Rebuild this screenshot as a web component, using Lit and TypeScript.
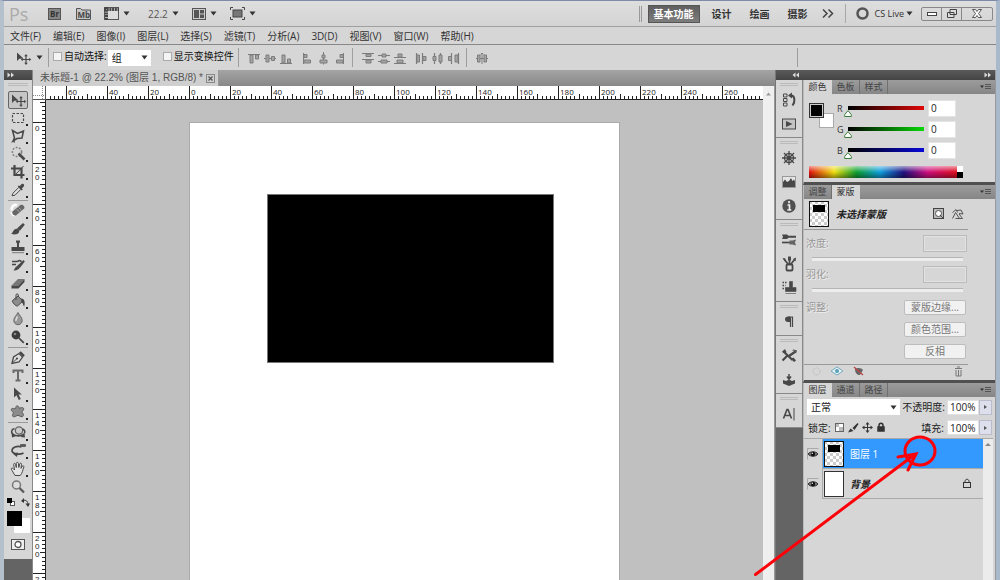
import { LitElement, html, svg, css, SVGTemplateResult } from "lit";
import { customElement, property, state } from "lit/decorators.js";

type Glyph = SVGTemplateResult;

const D = "#484848";
const M = "#7c7c7c";
const F = "#a4a4a4";

const toolGlyphs: Record<string, Glyph> = {
  move: svg`<path d="M3 3.500v8.500l2.300-2.200 4.200-.3z" fill="${D}"/><path d="M12 6.500v8M8 10.500h8" stroke="${D}" stroke-width="1.200"/><path d="M12 5l1.800 2.200h-3.600zM12 16l1.800-2.200h-3.600zM6.800 10.500l2-1.700v3.400zM17.200 10.500l-2-1.700v3.400z" fill="${D}"/>`,
  marquee: svg`<rect x="3.500" y="4.500" width="11" height="9" fill="none" stroke="${D}" stroke-width="1.200" stroke-dasharray="2.500 1.500"/>`,
  lasso: svg`<path d="M3.500 3.500l5 3 6-2.500-1.500 7-5 .5-4 2.500 1.500-3zM5 11.500c-.8 1.500.5 3 0 4" fill="none" stroke="${D}" stroke-width="1.500"/>`,
  wand: svg`<circle cx="8" cy="7" r="4.600" fill="none" stroke="${M}" stroke-width="1.500" stroke-dasharray="1.800 1.500"/><path d="M9.500 8.500l6 6" stroke="${D}" stroke-width="2.600"/>`,
  crop: svg`<path d="M5.500 2v10h10M2 5.500h10.500V15.500" fill="none" stroke="${D}" stroke-width="2.200"/><path d="M6 12L14.500 3" stroke="${D}" stroke-width="1"/>`,
  dropper: svg`<path d="M3 14.800l1-2.600 6-6 2 2-6 6z" fill="#ddd" stroke="${D}"/><path d="M8.800 5.500l3.900 3.900 1-1-.8-1 2-2.200c1-1.300-.8-3.200-2.200-2.200l-2 2-1-.6z" fill="${D}"/>`,
  heal: svg`<path d="M8 3.200c-3.500-1.200-6 1.600-5 5.300M2.500 10c.7 2 2 3 3.500 3" fill="none" stroke="#fff" stroke-width="2.600"/><path d="M3.500 9.500L11.500 3c1.500-1.200 5 1.500 3.700 3.500l-8 6.800c-2 1-5-1.800-3.700-3.800z" fill="#666"/><path d="M7.500 7.200l3.200 2.800M9.500 5.500l3 2.800" stroke="#aaa"/>`,
  brush: svg`<path d="M8 8.500l6-5.500 1.800 1.800L10.800 10.800z" fill="${D}"/><path d="M2 13.500c2.200-.2 2-4.800 5.800-4.700 2 .4 3.200 2.200 2 4-1.600 2.100-5.500 2-7.800.7z" fill="${D}"/>`,
  stamp: svg`<path d="M7 2.500h4v1.600l-1 1.400v3.500h5.500v4h-13V9H8V5.500L7 4.100z" fill="${D}"/><path d="M3 14.700h12" stroke="${M}"/>`,
  history: svg`<path d="M8 10l6.500-6 1.300 1.500-5 6.500z" fill="${D}"/><path d="M4 14.300c2.200 0 1.800-4.300 5-4.200 3.300 1.500.4 5-5 4.200z" fill="${D}"/><path d="M3 5.500h5.500M3 8.500h4M8.500 5.500c2-1.500 3.500-1.300 3.500.5" fill="none" stroke="${D}" stroke-width="1.700"/>`,
  eraser: svg`<path d="M2.500 11.500L9 5h6.500l-6 6.500z" fill="#777"/><path d="M2.500 11.500h7v3h-7zM9.500 11.500l6-6.500v3l-6 6.500z" fill="${D}"/>`,
  bucket: svg`<path d="M3.500 8.500L9 4l5 5-5.500 5c-1 .8-6-3.800-5-5.500z" fill="#8c8c8c" stroke="${D}"/><path d="M7 8V3c0-1.500 2.300-1.500 2.300 0v2" fill="none" stroke="${D}"/><path d="M12 6.500c3.500 0 4.300 3 3.300 8-1.500-1.200-1-3.500-3-4.500z" fill="${D}"/>`,
  blur: svg`<path d="M9 2.500c1.500 3 4.200 5 4.200 8a4.200 4.200 0 0 1-8.400 0c0-3 2.700-5 4.200-8z" fill="#999" stroke="#666"/><path d="M8.500 6.500c-1 1.500-2 3-1.500 4.500" fill="none" stroke="#ddd" stroke-width="1.500"/>`,
  dodge: svg`<circle cx="7" cy="7" r="4.400" fill="#3c3c3c"/><path d="M9.800 9.800l5 5" stroke="${D}" stroke-width="1.700"/><circle cx="6" cy="6" r="1.300" fill="#888"/>`,
  pen: svg`<path d="M3 14.500l1.500-6.500L10 4.500l3.500 3.500-3.500 5z" fill="#ddd" stroke="${D}" stroke-width="1.300"/><path d="M3 14.500l4.500-4.500" stroke="${D}"/><circle cx="8" cy="9.500" r="1.100" fill="${D}"/><path d="M10 3.800l1.800-1.600 4 4L14.200 8z" fill="${D}"/>`,
  type: svg`<path d="M4.500 6V3.500h9V6M9 3.500v10M6.500 13.500h5" fill="none" stroke="#6b6b6b" stroke-width="2"/>`,
  pointer: svg`<path d="M5 2.500v10l2.500-2.200 2.300 4.700 2-1-2.300-4.500h3.300z" fill="${D}"/>`,
  shape: svg`<path d="M7 3.500c2-1.700 3.300.5 3.300 2 2-1.500 5.200-1.200 4.200 1.300-.5 1-1.500 1.400-1.500 2.400 1.700 1.500 2 4.300 0 4.500-1.600.2-2.600-1.300-4-1.300-1.500 0-3.300 2-4.800 1.300-1.700-1 .2-3 .2-4.400C3 8.500 1.600 7 2.600 5.800c1-1.200 3.300.5 4-.3.500-.6-.3-1.500.4-2z" fill="#8c8c8c" stroke="#5b5b5b"/>`,
  rotate3d: svg`<circle cx="10" cy="6.500" r="3.700" fill="#ccc" stroke="#666" stroke-width="1.300"/><path d="M5.500 4.500C2 5.500 1.500 9 5 10.800c3 1.500 7 1.200 10-1M13.500 5c2.500 1 2.800 3 1.800 4.500" fill="none" stroke="${D}" stroke-width="1.500"/><path d="M2.500 8.500l.5 5 4.500-1.500zM15.500 9.500l.5 4-4.500-.5z" fill="${D}"/>`,
  orbit3d: svg`<path d="M12.500 5C8 3.500 3 5.500 3 8.500s7 5 11.500 2.500" fill="none" stroke="${D}" stroke-width="1.700"/><path d="M3.500 11.500l5.500-1-1 4.500z" fill="${D}"/><rect x="11" y="2" width="6" height="3" rx="1" fill="#5c5c5c"/>`,
  hand: svg`<path d="M6 15.500L3 10.500c-1.700-2.500.2-3.500 1.800-1.200l.7.700-.8-5.500c0-1.500 1.600-1.500 1.900 0l.7 3 0-4c.2-1.600 2-1.600 2.200 0l.3 4 .9-3.500c.4-1.400 2-1 1.800.4l-.5 4 1.200-2c.8-1.200 2-.5 1.600.7-1.200 3.200-1.400 6.400-3.600 8.400z" fill="#e4e4e4" stroke="${D}"/>`,
  zoom: svg`<circle cx="7.500" cy="7" r="4" fill="#ddd" stroke="#777" stroke-width="1.500"/><path d="M10.500 10l4.500 4.500" stroke="#5a5a5a" stroke-width="2.300"/>`,
};

const dockGlyphs: Record<string, Glyph> = {
  historyPanel: svg`<path d="M3.500 3h3.500v3h-3.500zM3.500 7.500h3.500v3h-3.500zM3.500 12h3.500v3h-3.500z" fill="none" stroke="${D}"/><path d="M9.500 4.500h1.500c4 0 4.500 6 1.500 10" fill="none" stroke="${D}" stroke-width="2"/><path d="M8 4.500l4-3v6z" fill="${D}"/>`,
  actions: svg`<rect x="2.500" y="4" width="13" height="10" fill="#c4c4c4" stroke="${D}"/><path d="M6 6v6l6.500-3z" fill="${D}"/>`,
  adjust: svg`<circle cx="9" cy="9" r="4.500" fill="none" stroke="${D}" stroke-width="1.300"/><path d="M9 2v14M2 9h14M4 4l10 10M14 4L4 14" stroke="${D}" stroke-width="1.300"/><circle cx="9" cy="9" r="2" fill="${D}"/>`,
  histogram: svg`<rect x="2.500" y="3.500" width="13" height="11" fill="#e5e5e5" stroke="#999"/><path d="M3 14V9l2-2.500 2 2.500 2-1 2-3 1.500 3L14 6.500l1 2V14z" fill="${D}"/>`,
  info: svg`<circle cx="9" cy="9" r="6.700" fill="#505050"/><path d="M9 4v2.200M7.500 8h2v5M7.300 13h4" stroke="#eee" stroke-width="1.700" fill="none"/>`,
  brushes: svg`<path d="M2 3.500h5l1.500 1.200H16v2H8.500L7 8H2l1-2z" fill="${D}"/><path d="M2 11.500h8" stroke="${D}" stroke-width="1.700"/><path d="M9.500 9.500h3l3.500-1-1 3 1 3-3.500-1h-3z" fill="#666"/>`,
  presets: svg`<rect x="6.500" y="9.500" width="6" height="6" rx="1" fill="#ddd" stroke="${D}" stroke-width="1.800"/><path d="M8 9L4 4M9.500 9V3M11 9l4-5" stroke="${D}" stroke-width="1.700"/><path d="M2.500 3l3 .5-.5 3zM8 1.500h3v4H8zM13 4l3-1.500-.5 4z" fill="${D}"/>`,
  clone: svg`<path d="M2.500 3.500h4M2.500 6.500h3M2.500 9.500h3" stroke="${D}" stroke-width="1.500" stroke-dasharray="1.500 1"/><path d="M9.500 2.500h3v6h3.500v4H5.500v-4h4zM5.500 14.500H16" fill="${D}" stroke="${D}" stroke-width=".6"/>`,
  paragraph: svg`<path d="M10.500 4v10M12.500 4v10M13 4H8.500" stroke="${D}" stroke-width="1.200"/><path d="M10 3.500H8c-4 0-4 5.500 0 5.500h2z" fill="${D}"/>`,
  toolsets: svg`<path d="M3 4l9.500 9M7 9l-4.500 4.500M15.500 4.500L9 9" stroke="${D}" stroke-width="2.200"/><path d="M2 5l3-3 1.500 3L5 6.500zM11 12l2.500-1.500 2.500 3-2 1.500zM12 3.500l3 .2L16 6.500l1-3-3.500-1z" fill="${D}"/>`,
  comps: svg`<path d="M3 9l3 1 3-1.500 3 1.500 3-1v3.500L9 15l-6-2.500z" fill="${D}"/><path d="M9 3v5M7 5.500L9 8.200l2-2.700" stroke="${D}" stroke-width="1.500" fill="none"/>`,
  character: svg`<path d="M3.500 13.500L7 4.500h1l3.500 9M5 10.500h5.500" fill="none" stroke="${D}" stroke-width="1.600"/><path d="M14 3v12.500" stroke="${D}"/>`,
};

const alignGlyphs: Record<string, Glyph> = {
  top: svg`<path d="M1 3.500h12" stroke="${M}"/><path d="M3 4h3v8H3zM8.500 4h3v4h-3z" fill="${F}" stroke="${M}"/>`,
  middle: svg`<path d="M1 7.500h12" stroke="${M}"/><path d="M3 4h3v7H3zM8.500 5.500h3v4h-3z" fill="${F}" stroke="${M}"/>`,
  bottom: svg`<path d="M1 12.500h12" stroke="${M}"/><path d="M3 4h3v8H3zM8.500 8h3v4h-3z" fill="${F}" stroke="${M}"/>`,
  left: svg`<path d="M3.500 2v11" stroke="${M}"/><path d="M4 3.500h3v3H4zM4 9h6.500v3H4z" fill="${F}" stroke="${M}"/>`,
  center: svg`<path d="M7.500 1v12.500" stroke="${M}"/><path d="M6 4h3v3H6zM4 9h7v3H4z" fill="${F}" stroke="${M}"/>`,
  right: svg`<path d="M11.500 2v11" stroke="${M}"/><path d="M8 3.500h3v3H8zM4.500 9H11v3H4.500z" fill="${F}" stroke="${M}"/>`,
  distTop: svg`<path d="M1 2.500h12M1 8.500h12" stroke="${M}" stroke-width="1.200"/><path d="M5 3h5v2.500H5zM5 9h5v3H5z" fill="${F}" stroke="${M}"/>`,
  distMid: svg`<path d="M1 4.500h12M1 10.500h12" stroke="${M}" stroke-width="1.200"/><path d="M5 3h4v3H5zM4 9h6v3H4z" fill="${F}" stroke="${M}"/>`,
  distBot: svg`<path d="M1 6.500h12M1 12.500h12" stroke="${M}" stroke-width="1.200"/><path d="M5 3h4v3H5zM4 9h6v3H4z" fill="${F}" stroke="${M}"/>`,
  distLeft: svg`<path d="M2.500 2v11M8.500 2v11" stroke="${M}" stroke-width="1.200"/><path d="M3 4h2.500v7H3zM9 5.500h3v4H9z" fill="${F}" stroke="${M}"/>`,
  distCen: svg`<path d="M4.500 2v11M10.500 2v11" stroke="${M}" stroke-width="1.200"/><path d="M3 5.500h3v4H3zM9 4h3v7H9z" fill="${F}" stroke="${M}"/>`,
  distRight: svg`<path d="M5.500 2v11M12.500 2v11" stroke="${M}" stroke-width="1.200"/><path d="M2.500 5.500h3v4h-3zM9 4h3v7H9z" fill="${F}" stroke="${M}"/>`,
  auto: svg`<path d="M7 2v11M1 7.500h12" stroke="${M}"/><path d="M2.500 4H5v7H2.500zM9 4h2.500v7H9zM5.500 3.500L7 2l1.500 1.500" fill="${F}" stroke="${M}"/>`,
};

const caret = html`<svg class="caret" width="7" height="5" viewBox="0 0 7 5" aria-hidden="true"><path d="M.5.500h6L3.500 4.500z" fill="#333" /></svg>`;

const checker = svg`<defs><pattern id="chk" width="6" height="6" patternUnits="userSpaceOnUse"><rect width="6" height="6" fill="#fff"/><path d="M0 0h3v3H0zM3 3h3v3H3z" fill="#ccc"/></pattern></defs>`;

const layerThumb = html`<svg width="20" height="26" viewBox="0 0 20 26" aria-hidden="true">
  ${checker}<rect x=".5" y=".5" width="19" height="25" fill="url(#chk)" stroke="#111" /><rect x="4" y="4" width="12" height="7" fill="#000" />
</svg>`;

const eye = html`<svg width="12" height="12" viewBox="0 0 12 12" aria-hidden="true">
  <path d="M.5 11.500V.5h11" stroke="#aaa" fill="none" />
  <path d="M1 6C3 3 9 3 11 6 9 9 3 9 1 6z" fill="#777" stroke="#333" /><circle cx="6" cy="6" r="2.200" fill="#111" /><circle cx="5.300" cy="5.300" r=".7" fill="#fff" />
</svg>`;

const range = (from: number, to: number) => Array.from({ length: Math.max(0, to - from + 1) }, (_, i) => from + i);

@customElement("edge-ruler")
class EdgeRuler extends LitElement {
  @property() axis: "x" | "y" = "x";
  @property({ type: Number }) origin = 0;
  @state() private extent = 0;

  static styles = css`
    :host { display: block; overflow: hidden; background: #fff; min-width: 0; min-height: 0; }
    svg { display: block; width: 100%; height: 100%; }
    text { font: 8px "Open Sans", sans-serif; fill: #222; }
    .down { font-family: "Liberation Sans", sans-serif; }
    path { stroke: #222; fill: none; shape-rendering: crispEdges; }
  `;

  private watcher = new ResizeObserver(() => this.measure());

  connectedCallback() {
    super.connectedCallback();
    this.watcher.observe(this);
  }

  disconnectedCallback() {
    this.watcher.disconnect();
    super.disconnectedCallback();
  }

  private measure() {
    this.extent = this.axis === "x" ? this.clientWidth : this.clientHeight;
  }

  render() {
    const step = 41 / 10;
    const first = Math.ceil(-this.origin / step);
    const last = Math.floor((this.extent - this.origin) / step);
    const marks = range(first, last).map((k) => ({ k, at: Math.round(this.origin + k * step) + 0.5 }));
    const size = (k: number) => (k % 10 === 0 ? 14 : k % 5 === 0 ? 5 : 3);
    const horizontal = this.axis === "x";
    const d = marks.map(({ k, at }) => (horizontal ? `M${at} 13v-${size(k)}` : `M12 ${at}h-${size(k)}`)).join("");
    const majors = marks.filter(({ k }) => k % 10 === 0);
    return html`<svg aria-hidden="true">
      <path d=${d} />
      <path d=${horizontal ? `M0 13.500h${this.extent}` : `M12.500 0v${this.extent}`} />
      ${majors.map(({ k, at }) => {
        const label = String(Math.abs(k * 2));
        return horizontal
          ? at + 16 < this.extent ? svg`<text x=${at + 1.5} y="9">${label}</text>` : ""
          : label.split("").map((c, i) => (at + 5 + i * 8 < this.extent ? svg`<text class="down" x="2" y=${at + 8 + i * 8}>${c}</text>` : ""));
      })}
    </svg>`;
  }
}

@customElement("panel-tabs")
class PanelTabs extends LitElement {
  @property({ type: Array }) tabs: string[] = [];
  @property({ type: Number }) active = 0;

  static styles = css`
    :host { display: flex; height: 14px; background: linear-gradient(#9c9c9c, #868686); align-items: stretch; }
    button { all: unset; box-sizing: border-box; width: 28px; text-align: center; font: 9px/14px "Open Sans", "Noto Sans CJK SC", sans-serif; color: #444; border-right: 1px solid #707070; white-space: nowrap; }
    button.on { background: #d6d6d6; color: #333; border-color: #d6d6d6; }
    svg { margin: auto 3px auto auto; }
  `;

  render() {
    return html`${this.tabs.map((t, i) => html`<button class=${i === this.active ? "on" : ""}>${t}</button>`)}
      <svg width="12" height="8" viewBox="0 0 12 8" aria-hidden="true"><path d="M0 2.500h4L2 5z" fill="#333" /><path d="M5 1.500h6M5 3.500h6M5 5.500h6" stroke="#555" /></svg>`;
  }
}

@customElement("app-root")
class AppRoot extends LitElement {
  static styles = css`
    :host { display: block; font: 10px/14px "Open Sans", "Noto Sans CJK SC", sans-serif; color: #333; }
    * { box-sizing: border-box; }
    svg { display: block; flex: none; }
    button { font: inherit; color: inherit; background: none; border: 0; padding: 0; margin: 0; white-space: nowrap; }
    input, select { font: inherit; margin: 0; color: #222; }
    label, a { white-space: nowrap; color: inherit; text-decoration: none; }
    .app { position: relative; height: 100vh; overflow: hidden; display: flex; flex-direction: column; background: #d6d6d6; border: solid #a9b9cc; border-width: 1px 4px 0; border-top-color: #7f8aa8; border-left-color: #b4c1cc; }
    .row { display: flex; align-items: center; }

    .title { height: 26px; border-bottom: 1px solid #a0a0a0; padding: 0 3px 0 5px; background: linear-gradient(#dedede, #d4d4d4); }
    .ps { font-size: 18px; line-height: 24px; color: #aaa; width: 39px; }
    .icon-btn { display: flex; align-items: center; gap: 4px; }
    .launch { gap: 15px; margin-right: 13px; }
    .views { gap: 13px; }
    .icon-btn.zoomv { margin-left: 5px; gap: 4px; color: #555; }
    .spring { flex: 1; }
    .grip { width: 3px; height: 16px; border: solid #999; border-width: 0 1px; margin-right: 6px; }
    .ws { font-weight: bold; gap: 18px; margin-right: 11px; }
    .ws .on { width: 52px; height: 18px; margin-right: -6px; background: linear-gradient(#5e5e5e, #7d7d7d); color: #fff; border: 1px solid #555; }
    .ws .extra { margin-left: -4px; }
    .vsep { width: 1px; height: 19px; background: #a8a8a8; }
    .live { display: flex; align-items: center; gap: 6px; font-size: 9px; margin: 0 6px 0 10px; }
    .live .caret { margin-left: -4px; margin-right: 2px; }
    .win { display: flex; border: 1px solid #888; border-radius: 2px; height: 14px; }
    .win button { width: 20px; display: grid; place-items: center; border-right: 1px solid #888; }
    .win button:last-child { width: 30px; border: 0; }

    .menu { height: 18px; border-bottom: 1px solid #888; padding: 0 6px; gap: 12px; }
    .options { height: 25px; padding-left: 10px; color: #111; }
    .options .vsep { background: #9e9e9e; }
    .check { display: flex; align-items: center; gap: 2px; padding-bottom: 3px; }
    .check.lead { margin-left: 4px; }
    .check input { appearance: none; width: 9px; height: 9px; background: #f4f4f4; border: 1px solid #aaa; }
    .pick { display: grid; align-items: center; background: #fff; }
    .pick select { grid-area: 1 / 1; appearance: none; border: 0; background: none; padding: 0 4px; width: 100%; height: 16px; line-height: 16px; border-radius: 0; }
    .pick .caret { grid-area: 1 / 1; justify-self: end; margin-right: 3px; pointer-events: none; }
    .pick.scope { width: 43px; margin: 0 12px 0 1px; }
    .after { margin-left: 4px; }
    .mover { display: flex; align-items: center; gap: 4px; margin-right: 5px; }
    .aligns { display: flex; gap: 2px; margin: 0 6px 0 8px; }
    .aligns + .aligns { margin-left: 1px; }
    .opt-end { margin-left: auto; margin-right: 198px; }

    .work { flex: 1; min-height: 0; display: grid; grid-template-columns: 29px minmax(0, 1fr) 28px 193px; background: #646464; }
    .cap { height: 10px; flex: none; background: linear-gradient(#5a5a5a, #444); display: flex; align-items: center; padding: 0 3px; }
    .cap.end { justify-content: flex-end; }
    .handle { height: 3px; margin: 0 4px; border: solid #bababa; border-width: 1px 0; }

    .tools { display: flex; flex-direction: column; border-right: 1px solid #888; }
    .toolbox { background: #d6d6d6; padding: 3px 0 9px; }
    .tool { display: block; position: relative; width: 20px; height: 18px; margin-left: 4px; border: 1px solid transparent; }
    .tool svg { margin: -1px 0 0 0; }
    .tool.on { border-color: #666; background: #c6c6c6; border-radius: 2px; }
    .tool.more::after { content: ""; position: absolute; right: -1px; bottom: 0; width: 2px; height: 2px; background: #222; }
    .handle + .tool { margin-top: 5px; }
    .rule { height: 1px; margin: 1px 4px; background: #999; }
    .mini { display: flex; gap: 5px; padding: 2px 3px; }
    .pair { display: grid; grid-template: 7px 8px 7px / 7px 8px 8px; margin: 2px 0 6px 3px; }
    .pair .bg { grid-area: 2 / 2 / 4 / 4; background: #fff; }
    .pair .fg { grid-area: 1 / 1 / 3 / 3; background: #000; z-index: 1; }
    .quick { margin: 0 0 0 7px; display: block; }

    .doc { display: flex; flex-direction: column; min-height: 0; }
    .strip { height: 16px; background: linear-gradient(#a4a4a4, #888); display: flex; }
    .dtab { display: flex; align-items: center; gap: 3px; padding: 0 3px 0 7px; background: #cfcfcf; color: #555; border-right: 1px solid #999; font-family: "Liberation Sans", "Noto Sans CJK SC", sans-serif; white-space: nowrap; }
    .grid { flex: 1; min-height: 0; display: grid; grid-template: 14px minmax(0, 1fr) / 13px minmax(0, 1fr) 12px; }
    .corner { background: #fff; border: solid #555; border-width: 0 1px 1px 0; }
    .scroll { grid-area: 1 / 3 / 3 / 4; background: #efefef; border-right: 1px solid #999; padding: 6px 3px; }
    .canvas { background: #c0c0c0; overflow: hidden; padding: 22px 0 0 143px; }
    .page { width: 431px; height: 640px; background: #fff; border: 1px solid #aaa; padding: 71px 0 0 77px; }
    .block { width: 287px; height: 169px; background: #000; border: 1px solid #777; }

    .dock { display: flex; flex-direction: column; border-left: 1px solid #777; }
    .dockset { background: #d6d6d6; border-bottom: 1px solid #888; padding-top: 3px; border-right: 1px solid #888; }
    .dockset .handle { margin-bottom: 3px; }
    .dockset button { display: grid; place-items: center; width: 26px; height: 24px; }
    .dockset svg { margin-bottom: 2px; }

    .panels { display: flex; flex-direction: column; min-height: 0; border-right: 1px solid #999; }
    .panel { background: #d6d6d6; border-bottom: 3px solid #505050; border-left: 1px solid #bbb; }
    .panel.last { flex: 1; border-bottom: 0; min-height: 0; display: flex; flex-direction: column; }
    .color { display: grid; grid-template-columns: 28px 1fr; padding: 6px 38px 4px 5px; height: 88px; }
    .swatches { display: grid; grid-template: 10px 5px 10px / 10px 5px 10px; padding-top: 3px; align-content: start; }
    .swatches .bg { grid-area: 2 / 2 / 4 / 4; background: #fff; border: 1px solid #aaa; }
    .swatches .fg { grid-area: 1 / 1 / 3 / 3; background: #000; border: 1px solid #333; outline: 1px solid #ccc; outline-offset: -2px; z-index: 1; }
    .chans { display: flex; flex-direction: column; gap: 4px; }
    .chan { display: grid; grid-template-columns: 7px 84px 28px; align-items: center; height: 17px; }
    .chan label { font-size: 9px; }
    .chan input[type="text"] { width: 28px; height: 17px; border: 1px solid #e4e4e4; background: #fff; padding: 0 2px 2px; }
    .chan input[type="range"] { appearance: none; width: 84px; height: 17px; background: var(--ramp) 4px 6px / 76px 4px no-repeat; }
    .chan input[type="range"]::-webkit-slider-thumb { appearance: none; width: 8px; height: 7px; margin-top: 10px; background: url("data:image/svg+xml,%3Csvg xmlns='http://www.w3.org/2000/svg' viewBox='0 0 8 7'%3E%3Cpath d='M4 .7L7.300 4.500V6.500H.7V4.500z' fill='white' stroke='%233a803a'/%3E%3C/svg%3E") no-repeat; }
    .r { --ramp: linear-gradient(90deg, #000, #e00808); }
    .g { --ramp: linear-gradient(90deg, #000, #08d808); }
    .b { --ramp: linear-gradient(90deg, #000, #0808d8); }
    .spectrum { grid-column: 1 / 3; align-self: end; height: 12px; margin-right: -6px; display: flex; }
    .hues { flex: 1; background: linear-gradient(#fff9, #fff0 50%, #0006), linear-gradient(90deg, #e01010, #f0e010 17%, #10a030 32%, #10a0e0 48%, #201080 64%, #d01080 80%, #e01020); }
    .ends { width: 6px; background: linear-gradient(#fff 50%, #000 50%); }

    .masks { padding: 1px 27px 0 0; color: #999; height: 181px; display: flex; flex-direction: column; }
    .headline { display: flex; align-items: center; gap: 7px; padding: 0 4px 1px 5px; height: 30px; border-bottom: 1px solid #999; }
    .headline em { font-weight: bold; color: #222; flex: 1; }
    .prop { display: flex; justify-content: space-between; align-items: center; padding: 4px 1px 0 2px; height: 22px; text-shadow: 1px 1px #eee; }
    .prop input { width: 44px; height: 17px; background: #d6d6d6; border: 1px solid #bbb; box-shadow: inset 0 0 0 1px #e2e2e2; }
    .bar { appearance: none; height: 4px; width: auto; margin: 5px 5px 0 8px; background: #ededed; border-top: 1px solid #b5b5b5; }
    .bar::-webkit-slider-thumb { appearance: none; width: 0; }
    .refine { display: flex; justify-content: space-between; padding: 8px 2px 0; text-shadow: 1px 1px #eee; }
    .acts { display: flex; flex-direction: column; gap: 7px; }
    .acts button { width: 62px; height: 15px; line-height: 13px; color: #777; background: #f1f1f1; border: 1px solid #bdbdbd; border-radius: 2px; text-shadow: none; }
    .foot { display: flex; align-items: center; gap: 9px; margin-top: auto; padding: 0 5px 3px 8px; height: 16px; border-top: 1px solid #999; }
    .foot .last { margin-left: auto; }

    .lrow { display: flex; align-items: center; color: #222; height: 20px; padding: 0 3px; gap: 2px; }
    .lrow + .lrow { padding-left: 4px; height: 21px; gap: 3px; }
    .pick.blend { flex: 1; }
    .num { display: flex; height: 15px; width: 45px; }
    .num input { width: 32px; background: #fff; border: 1px solid #e0e0e0; padding: 0 2px; }
    .num button { width: 13px; display: grid; place-items: center; background: #dde0ec; border: 1px solid #b8bccb; }
    .locks { display: flex; align-items: center; gap: 3px; margin-right: auto; }
    .stack { flex: 1; min-height: 0; display: grid; grid-template-columns: minmax(0, 1fr) 10px; margin-right: 2px; border-top: 1px solid #aaa; }
    .side { background: #ececec; padding: 3px 2px; }
    .layer { display: flex; align-items: center; height: 30px; border-bottom: 1px solid #aaa; }
    .layer .vis { width: 19px; height: 30px; background: #d6d6d6; display: grid; place-items: center; border-right: 1px solid #aaa; margin-right: 1px; }
    .layer span { margin-left: 6px; flex: 1; }
    .layer.sel { background: #3399ff; color: #fff; }
    .layer.base span { font-style: italic; color: #222; font-weight: bold; }
    .layer.base > svg { margin-right: 11px; }
    .white { width: 20px; height: 26px; background: #fff; border: 1px solid #333; }
    .note { position: absolute; right: 56px; top: 429px; pointer-events: none; }
  `;

  private tool(name: string, more = true, on = false) {
    return html`<button class="tool ${more ? "more" : ""} ${on ? "on" : ""}" aria-label=${name}>
      <svg width="18" height="18" viewBox="0 0 18 18" fill="none">${toolGlyphs[name]}</svg>
    </button>`;
  }

  private aligns(names: string[]) {
    return html`<div class="aligns">${names.map((n) => html`<button aria-label=${n}><svg width="14" height="14" viewBox="0 0 14 14">${alignGlyphs[n]}</svg></button>`)}</div>`;
  }

  private dockset(names: string[]) {
    return html`<div class="dockset"><div class="handle"></div>
      ${names.map((n) => html`<button aria-label=${n}><svg width="18" height="18" viewBox="0 0 18 18" fill="none">${dockGlyphs[n]}</svg></button>`)}
    </div>`;
  }

  private titleBar() {
    return html`<header class="row title">
      <div class="ps">Ps</div>
      <div class="row launch">
        <button aria-label="Bridge"><svg width="13" height="12" viewBox="0 0 13 12"><rect x=".5" y=".5" width="12" height="11" fill="#858585" stroke="#555" /><text x="2" y="9" font-size="8" font-weight="bold" fill="#333">Br</text></svg></button>
        <button aria-label="Mini Bridge"><svg width="15" height="12" viewBox="0 0 15 12"><path d="M.5 11.500V.5h4l1.500 1.500h8.500v9.500z" fill="#c5c5c5" stroke="#555" /><text x="1.500" y="10" font-size="8" font-weight="bold" fill="#444">Mb</text></svg></button>
      </div>
      <div class="row views">
        <button class="icon-btn" aria-label="Extras"><svg width="15" height="13" viewBox="0 0 15 13"><rect x=".5" y=".5" width="14" height="12" fill="#ddd" stroke="#555" /><path d="M0 2.500h15M2.500 0v13" stroke="#444" stroke-width="3" stroke-dasharray="2 .7" /></svg>${caret}</button>
        <button class="icon-btn zoomv">22.2 ${caret}</button>
        <button class="icon-btn" aria-label="Arrange"><svg width="14" height="12" viewBox="0 0 14 12"><rect x=".5" y=".5" width="13" height="11" fill="#ccc" stroke="#555" /><path d="M2 2h5v8H2zM8 2h4v3.500H8zM8 6.500h4V10H8z" fill="#555" /></svg>${caret}</button>
        <button class="icon-btn" aria-label="Screen mode"><svg width="15" height="13" viewBox="0 0 15 13"><rect x="3" y="3" width="9" height="7" fill="#777" stroke="#444" /><path d="M.5 3V.5H3M12 .5h2.500V3M.5 10v2.500H3M12 12.500h2.500V10" fill="none" stroke="#444" /></svg>${caret}</button>
      </div>
      <div class="spring"></div>
      <div class="grip"></div>
      <nav class="row ws">
        <button class="on">基本功能</button><button>设计</button><button>绘画</button><button>摄影</button>
        <button class="extra" aria-label="More"><svg width="12" height="9" viewBox="0 0 12 9"><path d="M1 .5l4 4-4 4M6.500.5l4 4-4 4" fill="none" stroke="#444" stroke-width="1.500" /></svg></button>
      </nav>
      <div class="vsep"></div>
      <button class="live"><svg width="13" height="13" viewBox="0 0 13 13"><circle cx="6.500" cy="6.500" r="5" fill="none" stroke="#555" stroke-width="2.500" /></svg>CS Live ${caret}</button>
      <div class="win">
        <button aria-label="Minimize"><svg width="10" height="4" viewBox="0 0 10 4"><rect x=".5" y=".5" width="9" height="3" fill="#fff" stroke="#444" /></svg></button>
        <button aria-label="Restore"><svg width="10" height="9" viewBox="0 0 10 9"><path d="M3 .5h6.500v5H3zM.5 3.500H7v5H.5z" fill="#ddd" stroke="#444" /></svg></button>
        <button aria-label="Close"><svg width="10" height="9" viewBox="0 0 10 9"><path d="M.5.500h3L5 2.500 6.500.5h3L6.500 4.500l3 4h-3L5 6.500 3.500 8.500h-3l3-4z" fill="#fff" stroke="#555" /></svg></button>
      </div>
    </header>`;
  }

  private colorPanel() {
    return html`<section class="panel">
      <panel-tabs .tabs=${["颜色", "色板", "样式"]}></panel-tabs>
      <div class="color">
        <div class="swatches"><div class="bg"></div><div class="fg"></div></div>
        <div class="chans">
          ${["R", "G", "B"].map((c) => html`<div class="chan ${c.toLowerCase()}">
            <label for="ch${c}">${c}</label><input type="range" min="0" max="255" .value=${"0"} aria-label=${c} /><input id="ch${c}" type="text" .value=${"0"} />
          </div>`)}
        </div>
        <div class="spectrum"><div class="hues"></div><div class="ends"></div></div>
      </div>
    </section>`;
  }

  private maskPanel() {
    return html`<section class="panel">
      <panel-tabs .tabs=${["调整", "蒙版"]} .active=${1}></panel-tabs>
      <div class="masks">
        <div class="headline">${layerThumb}<em>未选择蒙版</em>
          <svg width="11" height="12" viewBox="0 0 11 12"><rect x=".5" y=".5" width="10" height="10" fill="#bbb" stroke="#444" /><circle cx="5.500" cy="5.500" r="3" fill="#fff" stroke="#555" /><path d="M7 7l3 3" stroke="#444" /></svg>
          <svg width="13" height="12" viewBox="0 0 13 12"><path d="M1.500 4.500L5 1.500l1.500 3M1.500 10.500l3-6 4 6M6 2.500l4-.5 2 4-4-.5M8 6l3.500 4.500h-7" fill="none" stroke="#555" /></svg>
        </div>
        <div class="prop"><label for="density">浓度:</label><input id="density" disabled /></div>
        <input class="bar" type="range" aria-label="浓度" disabled />
        <div class="prop"><label for="feather">羽化:</label><input id="feather" disabled /></div>
        <input class="bar" type="range" aria-label="羽化" disabled />
        <div class="refine"><span>调整:</span><div class="acts"><button>蒙版边缘...</button><button>颜色范围...</button><button>反相</button></div></div>
        <div class="foot">
          <svg width="9" height="9" viewBox="0 0 9 9"><circle cx="4.500" cy="4.500" r="3.500" fill="none" stroke="#bbb" stroke-dasharray="1.500 1" /></svg>
          <svg width="14" height="10" viewBox="0 0 14 10"><path d="M1 5l6-4 6 4-6 4z" fill="#e5f4f8" stroke="#7ab" /><circle cx="7" cy="5" r="2" fill="#58a0b5" /></svg>
          <svg width="11" height="10" viewBox="0 0 11 10"><path d="M2 3c3-2 7-1 8 1l-3 5c-3 0-5-2-5-6z" fill="#666" /><path d="M1 1l9 8" stroke="#b44" stroke-width="1.400" /></svg>
          <svg class="last" width="9" height="11" viewBox="0 0 9 11"><path d="M1 2.500h7M3 1h3M2 4v6h5V4M4.500 4v6" fill="none" stroke="#777" /></svg>
        </div>
      </div>
    </section>`;
  }

  private num(id: string) {
    return html`<div class="num"><input id=${id} .value=${"100%"} /><button aria-label="More"><svg width="4" height="6" viewBox="0 0 4 6"><path d="M0 1l3 2-3 2z" fill="#555" /></svg></button></div>`;
  }

  private layersPanel() {
    const shackle = svg`<path d="M3 5V3.500C3 .5 7 .5 7 3.500V5"/>`;
    return html`<section class="panel last">
      <panel-tabs .tabs=${["图层", "通道", "路径"]}></panel-tabs>
      <div class="lrow">
        <div class="pick blend"><select aria-label="混合模式"><option>正常</option></select>${caret}</div>
        <label for="opacity">不透明度:</label>${this.num("opacity")}
      </div>
      <div class="lrow">
        <span>锁定:</span>
        <div class="locks">
          <svg width="11" height="10" viewBox="0 0 11 10"><rect x="1.500" y=".5" width="8" height="8" fill="#fff" stroke="#666" /><path d="M2 1h3v3H2zM5 4h4v4H5z" fill="#bbb" /></svg>
          <svg width="11" height="10" viewBox="0 0 11 10"><path d="M4.500 5L9.500 0l1 1L6.500 7zM0 9.500l2.500-4L5.500 8z" fill="#333" /></svg>
          <svg width="11" height="11" viewBox="0 0 11 11"><path d="M5.500 1v9M1 5.500h9" stroke="#333" /><path d="M5.500 0l2 2.500h-4zM5.500 11l2-2.500h-4zM0 5.500l2.500-2v4zM11 5.500l-2.500-2v4z" fill="#333" /></svg>
          <svg width="10" height="11" viewBox="0 0 10 11" fill="none" stroke="#333" stroke-width="1.500">${shackle}<rect x="2" y="5" width="6" height="4" fill="#333" /></svg>
        </div>
        <label for="fill">填充:</label>${this.num("fill")}
      </div>
      <div class="stack">
        <div>
          <div class="layer sel"><button class="vis" aria-label="图层 1">${eye}</button>${layerThumb}<span>图层 1</span></div>
          <div class="layer base"><button class="vis" aria-label="背景">${eye}</button><div class="white"></div><span>背景</span>
            <svg width="10" height="11" viewBox="0 0 10 11" fill="none" stroke="#333">${shackle}<rect x="1.500" y="4.500" width="7" height="5" /></svg></div>
        </div>
        <div class="side"><svg width="6" height="4" viewBox="0 0 6 4"><path d="M0 4l3-3 3 3z" fill="#888" /></svg></div>
      </div>
    </section>`;
  }

  render() {
    const back = html`<svg width="8" height="6" viewBox="0 0 8 6"><path d="M3.500.5v5L.5 3zM7 .5v5L4 3z" fill="#ddd" /></svg>`;
    const fwd = html`<svg width="8" height="6" viewBox="0 0 8 6"><path d="M.5.500v5l3-2.500zM4 .5v5L7 3z" fill="#ddd" /></svg>`;
    const menus = ["文件(F)", "编辑(E)", "图像(I)", "图层(L)", "选择(S)", "滤镜(T)", "分析(A)", "3D(D)", "视图(V)", "窗口(W)", "帮助(H)"];
    return html`<div class="app">
      ${this.titleBar()}
      <nav class="row menu">${menus.map((m) => html`<a href="#">${m}</a>`)}</nav>
      <div class="row options">
        <button class="mover" aria-label="Move"><svg width="18" height="18" viewBox="0 0 18 18">${toolGlyphs.move}</svg>${caret}</button>
        <div class="vsep"></div>
        <label class="check lead"><input type="checkbox" />自动选择:</label>
        <div class="pick scope"><select aria-label="自动选择"><option>组</option></select>${caret}</div>
        <label class="check"><input type="checkbox" />显示变换控件</label>
        <div class="vsep after"></div>
        ${this.aligns(["top", "middle", "bottom"])}${this.aligns(["left", "center", "right"])}
        <div class="vsep"></div>
        ${this.aligns(["distTop", "distMid", "distBot"])}${this.aligns(["distLeft", "distCen", "distRight"])}
        <div class="vsep"></div>
        ${this.aligns(["auto"])}
        <div class="vsep opt-end"></div>
      </div>
      <main class="work">
        <aside class="tools">
          <div class="cap">${fwd}</div>
          <div class="toolbox">
            <div class="handle"></div>
            ${this.tool("move", false, true)}${["marquee", "lasso", "wand", "crop", "dropper"].map((n) => this.tool(n))}
            <div class="rule"></div>
            ${["heal", "brush", "stamp", "history", "eraser", "bucket", "blur", "dodge"].map((n) => this.tool(n))}
            <div class="rule"></div>
            ${["pen", "type", "pointer", "shape"].map((n) => this.tool(n))}
            <div class="rule"></div>
            ${["rotate3d", "orbit3d", "hand"].map((n) => this.tool(n))}${this.tool("zoom", false)}
            <div class="mini">
              <svg width="9" height="9" viewBox="0 0 9 9"><rect x="3.500" y="3.500" width="4" height="4" fill="#fff" stroke="#555" /><rect width="5" height="5" fill="#000" /></svg>
              <svg width="9" height="9" viewBox="0 0 9 9"><path d="M2 2.500c3-1 5 1 5 4" fill="none" stroke="#333" /><path d="M0 3l3-3v5zM4.500 5.500h4.500L7 9z" fill="#333" /></svg>
            </div>
            <div class="pair"><div class="bg"></div><div class="fg"></div></div>
            <button class="quick" aria-label="Quick mask"><svg width="14" height="11" viewBox="0 0 14 11"><rect x=".5" y=".5" width="13" height="10" fill="#eee" stroke="#555" /><circle cx="7" cy="5.500" r="3" fill="#fff" stroke="#555" stroke-width="1.300" /></svg></button>
          </div>
        </aside>
        <section class="doc">
          <div class="strip"><div class="dtab">未标题-1 @ 22.2% (图层 1, RGB/8) *
            <button aria-label="Close document"><svg width="9" height="9" viewBox="0 0 9 9"><rect x=".5" y=".5" width="8" height="8" fill="none" stroke="#888" /><path d="M2.500 2.500l4 4M6.500 2.500l-4 4" stroke="#555" stroke-width="1.300" /></svg></button></div></div>
          <div class="grid">
            <div class="corner"><svg width="12" height="13" viewBox="0 0 12 13"><path d="M9.500 0v13M0 9.500h12" stroke="#888" stroke-dasharray="1 1" /></svg></div>
            <edge-ruler axis="x" origin="143"></edge-ruler>
            <edge-ruler axis="y" origin="22"></edge-ruler>
            <div class="canvas"><div class="page"><div class="block"></div></div></div>
            <div class="scroll"><svg width="5" height="4" viewBox="0 0 5 4"><path d="M0 3.500L2.500.5 5 3.500z" fill="#999" /></svg></div>
          </div>
        </section>
        <aside class="dock">
          <div class="cap end">${back}</div>
          ${this.dockset(["historyPanel", "actions"])}${this.dockset(["adjust", "histogram", "info"])}${this.dockset(["brushes", "presets", "clone"])}
          ${this.dockset(["paragraph"])}${this.dockset(["toolsets", "comps"])}${this.dockset(["character"])}
        </aside>
        <aside class="panels">
          <div class="cap end">${fwd}</div>
          ${this.colorPanel()}${this.maskPanel()}${this.layersPanel()}
        </aside>
      </main>
      <svg class="note" width="190" height="150" viewBox="750 430 190 150" fill="none" stroke="#fc0208" stroke-width="3" stroke-linecap="round" aria-hidden="true">
        <ellipse cx="920" cy="451" rx="15" ry="14" /><path d="M755.500 574.500L914 455M898 457l18-3-8 16" />
      </svg>
    </div>`;
  }
}
